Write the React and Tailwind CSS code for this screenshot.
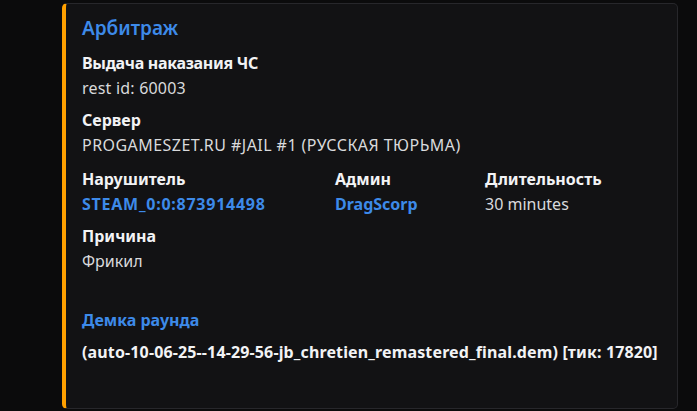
export default function App() {
  return (
    <div className="w-[697px] h-[411px] bg-[#0b0b0c] pl-[62px] pr-[19px] pt-[3px] font-['Noto_Sans',sans-serif]">
      <div className="h-[406px] rounded-[5px] border border-[#27272b] border-l-4 border-l-[#ffa000] bg-[#121214] pl-[16px] pt-[12px]">
        <div className="text-[19px] leading-[25px] font-semibold text-[#3d8ae9]">Арбитраж</div>
        <div className="mt-[10px] flex flex-col gap-[7px]">
          <div>
            <div className="text-[16px] leading-[25px] font-bold text-[#f2f3f5] tracking-[-0.3px]">Выдача наказания ЧС</div>
            <div className="text-[16px] leading-[25px] text-[#d9dadc] tracking-[0.2px]">rest id: 60003</div>
          </div>
          <div>
            <div className="text-[16px] leading-[25px] font-bold text-[#f2f3f5]">Сервер</div>
            <div className="text-[16px] leading-[25px] text-[#d9dadc] tracking-[0.45px]">PROGAMESZET.RU #JAIL #1 (РУССКАЯ ТЮРЬМА)</div>
          </div>
          <div className="flex mt-[2px]">
            <div className="w-[253px]">
              <div className="text-[16px] leading-[25px] font-bold text-[#f2f3f5]">Нарушитель</div>
              <div className="text-[16px] leading-[25px] font-bold text-[#3d8ae9] tracking-[0.75px]">STEAM_0:0:873914498</div>
            </div>
            <div className="w-[150px]">
              <div className="text-[16px] leading-[25px] font-bold text-[#f2f3f5]">Админ</div>
              <div className="text-[16px] leading-[25px] font-bold text-[#3d8ae9]">DragScorp</div>
            </div>
            <div>
              <div className="text-[16px] leading-[25px] font-bold text-[#f2f3f5]">Длительность</div>
              <div className="text-[16px] leading-[25px] text-[#d9dadc]">30 minutes</div>
            </div>
          </div>
          <div>
            <div className="text-[16px] leading-[25px] font-bold text-[#f2f3f5]">Причина</div>
            <div className="text-[16px] leading-[25px] text-[#d9dadc]">Фрикил</div>
          </div>
        </div>
        <div className="mt-[34px] text-[16px] leading-[25px] font-bold text-[#3d8ae9]">Демка раунда</div>
        <div className="mt-[7px] text-[16px] leading-[25px] font-bold text-[#f2f3f5] tracking-[0.14px]">(auto-10-06-25--14-29-56-jb_chretien_remastered_final.dem) [тик: 17820]</div>
      </div>
    </div>
  );
}
